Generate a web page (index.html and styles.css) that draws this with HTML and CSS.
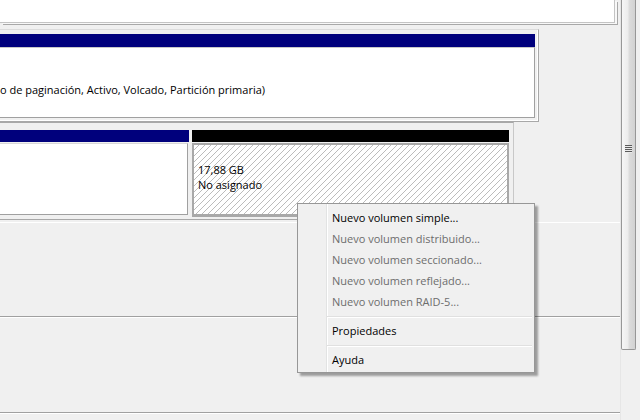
FILE: index.html
```html
<!DOCTYPE html>
<html>
<head>
<meta charset="utf-8">
<link rel="stylesheet" href="styles.css">
</head>
<body>
<div class="main">
  <div class="topbox"></div>

  <div class="disk0">
    <div class="bar navy"></div>
    <div class="part0">
      <span class="ptext">o de paginación, Activo, Volcado, Partición primaria)</span>
    </div>
  </div>

  <div class="disk1">
    <div class="col colc">
      <div class="bar navy"></div>
      <div class="partc"></div>
    </div>
    <div class="col colu">
      <div class="bar black"></div>
      <div class="partu">
        <div class="line">17,88 GB</div>
        <div class="line">No asignado</div>
      </div>
    </div>
  </div>

  <div class="band band1"></div>
  <div class="band band2"></div>

  <div class="menu">
    <div class="item">Nuevo volumen simple...</div>
    <div class="item off">Nuevo volumen distribuido...</div>
    <div class="item off">Nuevo volumen seccionado...</div>
    <div class="item off">Nuevo volumen reflejado...</div>
    <div class="item off">Nuevo volumen RAID-5...</div>
    <div class="sep"></div>
    <div class="item">Propiedades</div>
    <div class="sep"></div>
    <div class="item">Ayuda</div>
  </div>
</div>
<div class="scroll">
  <div class="thumb">
    <div class="grip"></div>
  </div>
</div>
</body>
</html>
```

FILE: styles.css
```css
html, body {
  margin: 0;
  padding: 0;
}
body {
  width: 640px;
  height: 420px;
  overflow: hidden;
  background: #f0f0f0;
  display: flex;
  font-family: "Open Sans", "Noto Sans", sans-serif;
  font-size: 11px;
  color: #000;
}
.main {
  width: 620px;
  height: 420px;
  position: relative;
  flex: none;
}
.topbox {
  width: 614px;
  height: 22px;
  background: #fff;
  border-right: 1px solid #c4c4c4;
  border-bottom: 1px solid #c4c4c4;
  box-shadow: 2px 1px 0 #f8f8f8, 3px 2px 0 #a8a8a8;
}
.disk0 {
  margin-top: 6px;
  width: 535px;
  padding: 4px 3px 3px 0;
  border-top: 1px solid #dcdcdc;
  border-right: 1px solid #a8a8a8;
  border-bottom: 1px solid #a8a8a8;
  box-shadow: inset -1px -1px 0 #fff;
}
.bar {
  height: 13px;
}
.navy { background: #00007c; }
.black { background: #000; }
.part0 {
  height: 69px;
  background: #fff;
  border-top: 1px solid #c8c8c8;
  border-right: 1px solid #a0a0a0;
  border-bottom: 1px solid #a0a0a0;
  display: flex;
  align-items: flex-start;
}
.ptext {
  margin-top: 34px;
  line-height: 15px;
  white-space: nowrap;
}
.disk1 {
  width: 509px;
  display: flex;
  gap: 3px;
  padding: 7px 4px 2px 0;
  border-top: 1px solid #a8a8a8;
  border-right: 1px solid #c8c8c8;
  border-bottom: 1px solid #a8a8a8;
}
.disk1 .bar {
  height: 12px;
}
.colc { width: 189px; }
.colu { width: 317px; }
.partc {
  height: 70px;
  margin-top: 1px;
  width: 187px;
  background: #fff;
  border-top: 1px solid #d8d8d8;
  border-right: 1px solid #a0a0a0;
  border-bottom: 1px solid #a0a0a0;
}
.partu {
  height: 52px;
  margin-top: 1px;
  border: 2px solid #a8a8a8;
  border-bottom-width: 3px;
  padding: 17px 0 0 4px;
  background-color: #fff;
  background-image: repeating-linear-gradient(135deg, #fff 0px, #fff 3.2px, #bcbcbc 3.2px, #bcbcbc 4.24px);
}
.line {
  line-height: 15px;
  height: 15px;
  white-space: nowrap;
}
.band {
  width: 620px;
  border-bottom: 1px solid #a0a0a0;
  box-shadow: 0 1px 0 #fff;
}
.band1 {
  height: 93px;
  border-top: 1px solid #fff;
  margin-top: 2px;
}
.band2 {
  height: 94px;
  margin-top: 1px;
}
.menu {
  position: absolute;
  left: 297px;
  top: 203px;
  width: 236px;
  padding: 3px 0 2px 0;
  background: #f0f0f0;
  border: 1px solid #979797;
  box-shadow: 3px 3px 2px rgba(0, 0, 0, 0.35);
  background-image: linear-gradient(to right, transparent 28px, #e2e3e3 28px, #e2e3e3 29px, #ffffff 29px, #ffffff 30px, transparent 30px);
}
.item {
  height: 21px;
  line-height: 21px;
  padding-left: 34px;
  white-space: nowrap;
}
.item.off {
  color: #6d6d6d;
}
.sep {
  height: 8px;
  margin-left: 29px;
  margin-right: 2px;
  background: linear-gradient(to bottom, transparent 4px, #e0e0e0 4px, #e0e0e0 5px, #fff 5px, #fff 6px, transparent 6px);
}
.scroll {
  width: 16px;
  height: 420px;
  flex: none;
  background: #f0f0f0;
  border-left: 1px solid #e6e6e6;
  box-sizing: border-box;
}
.thumb {
  width: 13px;
  height: 349px;
  border: 1px solid #979797;
  border-top: none;
  border-radius: 0 0 2px 2px;
  background: linear-gradient(to right, #f6f6f6, #ececec 45%, #dcdcdc 55%, #d2d2d2);
  display: flex;
  flex-direction: column;
  align-items: center;
}
.grip {
  margin-top: 145px;
  width: 7px;
  height: 8px;
  background: repeating-linear-gradient(to bottom, #5a5a5a 0, #5a5a5a 1px, #eaeaea 1px, #eaeaea 2px);
}
```
